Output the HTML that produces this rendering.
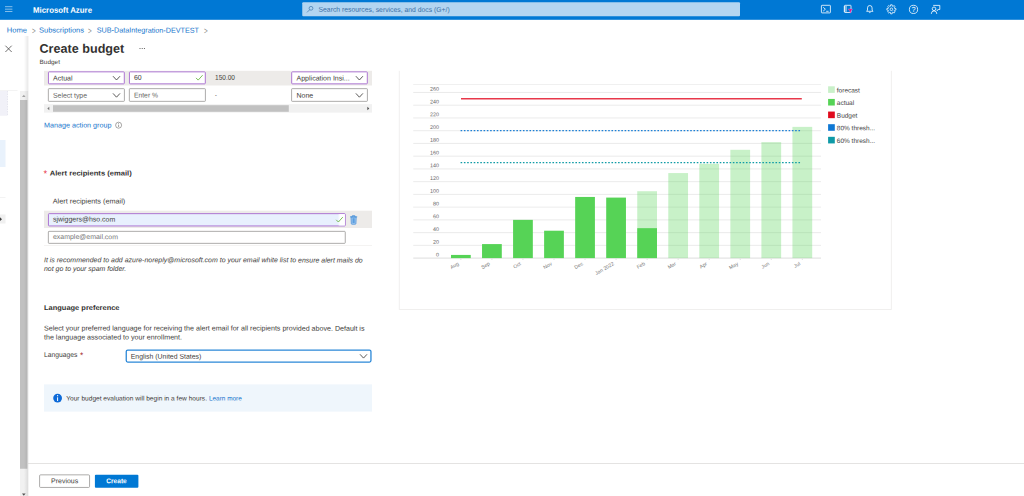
<!DOCTYPE html>
<html><head><meta charset="utf-8"><title>Create budget - Microsoft Azure</title>
<style>
html,body{margin:0;padding:0}
body{width:1024px;height:496px;position:relative;overflow:hidden;background:#fff;font-family:'Liberation Sans',sans-serif;color:#323130}
.t{position:absolute;left:0;top:0;white-space:pre;line-height:1;transform-origin:0 0}
svg{position:absolute;left:0;top:0;overflow:visible}
</style></head><body>

<svg width="1024" height="496" viewBox="0 0 1024 496">
<defs><linearGradient id="sh" x1="0" x2="1" y1="0" y2="0"><stop offset="0" stop-color="#000" stop-opacity="0"/><stop offset="1" stop-color="#000" stop-opacity="0.10"/></linearGradient><linearGradient id="wg" x1="0" x2="1" y1="0" y2="0"><stop offset="0" stop-color="#fff" stop-opacity="0"/><stop offset="1" stop-color="#fff" stop-opacity="1"/></linearGradient></defs>
<rect x="0" y="0" width="1024.00" height="19.80" fill="#0078d4"/>
<rect x="5" y="6.5" width="7.40" height="0.60" fill="#fff" opacity="0.85"/>
<rect x="5" y="8.799999999999999" width="7.40" height="0.60" fill="#fff" opacity="0.85"/>
<rect x="5" y="11.0" width="7.40" height="0.60" fill="#fff" opacity="0.85"/>
<rect x="302.25" y="2.3" width="437.75" height="14.00" fill="#b3d5f1" rx="1"/>
<rect x="0" y="90.4" width="17.50" height="0.50" fill="#e6e6e6"/>
<rect x="0" y="90.9" width="7.50" height="24.85" fill="#f1f1f8"/>
<line x1="7.5" x2="7.5" y1="91" y2="115.75" stroke="#d5d5e2" stroke-width="0.5" stroke-dasharray="1.5 1"/>
<rect x="0" y="140" width="5.50" height="27.00" fill="#e9f2fc"/>
<rect x="0" y="197.3" width="5.50" height="0.50" fill="#e6e6e6"/>
<rect x="0" y="214.5" width="5.50" height="9.00" fill="#f0f0f0"/>
<rect x="20" y="91" width="8.20" height="405.00" fill="#f1f1f1"/>
<rect x="20" y="100" width="7.30" height="368.75" fill="#c1c1c1"/>
<rect x="24" y="36" width="4.60" height="460.00" fill="url(#sh)"/>
<rect x="28.6" y="36" width="995.40" height="460.00" fill="#fff"/>
<rect x="44" y="70.8" width="328.00" height="14.70" fill="#edebe9"/>
<rect x="48.45" y="71.85000000000001" width="75.85" height="12.00" fill="#fff" stroke="#a568cf" stroke-width="0.9" rx="0.7"/>
<rect x="48.35" y="88.64999999999999" width="76.05" height="12.70" fill="#fff" stroke="#8a8886" stroke-width="0.7" rx="0.7"/>
<rect x="129.45" y="71.85000000000001" width="75.85" height="12.00" fill="#fff" stroke="#a568cf" stroke-width="0.9" rx="0.7"/>
<rect x="129.35" y="88.64999999999999" width="76.05" height="12.70" fill="#fff" stroke="#8a8886" stroke-width="0.7" rx="0.7"/>
<rect x="291.7" y="71.85000000000001" width="75.60" height="12.00" fill="#fff" stroke="#a568cf" stroke-width="0.9" rx="0.7"/>
<rect x="291.6" y="88.64999999999999" width="75.80" height="12.70" fill="#fff" stroke="#8a8886" stroke-width="0.7" rx="0.7"/>
<rect x="44" y="104.2" width="328.00" height="8.40" fill="#f1f1f1"/>
<rect x="53" y="105.2" width="235.80" height="6.60" fill="#c1c1c1"/>
<rect x="44" y="210.7" width="328.00" height="17.30" fill="#edebe9"/>
<rect x="48.45" y="213.64999999999998" width="296.80" height="12.30" fill="#e8f0fe" stroke="#a568cf" stroke-width="0.9" rx="0.7"/>
<rect x="339.5" y="214.1" width="5.40" height="11.40" fill="#fff"/>
<rect x="338" y="214.1" width="1.6" height="11.4" fill="url(#wg)"/>
<rect x="48.35" y="231.35" width="296.90" height="12.00" fill="#fff" stroke="#8a8886" stroke-width="0.7" rx="0.7"/>
<rect x="44" y="245.3" width="328.00" height="0.60" fill="#edebe9"/>
<rect x="126.25" y="350.04999999999995" width="244.70" height="12.00" fill="#fff" stroke="#2b88d8" stroke-width="1.3" rx="1.5"/>
<rect x="44" y="384.4" width="328.00" height="27.20" fill="#eff6fc"/>
<rect x="27.8" y="463.1" width="996.20" height="0.60" fill="#d2d0ce"/>
<rect x="39.6" y="474.85" width="49.95" height="12.60" fill="#fff" stroke="#8a8886" stroke-width="0.7" rx="1"/>
<rect x="94.9" y="474.8" width="43.50" height="13.00" fill="#0078d4" rx="1"/>
<path d="M399.3 70.8 V309.5 H891.4 V70.8" fill="none" stroke="#e6e4e2" stroke-width="0.6"/>
<line x1="413.25" x2="821" y1="84.5" y2="84.5" stroke="#e6e6e6" stroke-width="0.6"/>
<line x1="413.25" x2="821" y1="258.10" y2="258.10" stroke="#e4e4e4" stroke-width="1.4"/>
<text transform="matrix(1,0.0005,0,1,439.1,256.40)" font-size="5.4" fill="#666" text-anchor="end" font-family="'Liberation Sans',sans-serif">0</text>
<line x1="413.25" x2="821" y1="245.36" y2="245.36" stroke="#e2e2e2" stroke-width="0.7"/>
<text transform="matrix(1,0.0005,0,1,439.1,243.66)" font-size="5.4" fill="#666" text-anchor="end" font-family="'Liberation Sans',sans-serif">20</text>
<line x1="413.25" x2="821" y1="232.62" y2="232.62" stroke="#e2e2e2" stroke-width="0.7"/>
<text transform="matrix(1,0.0005,0,1,439.1,230.92)" font-size="5.4" fill="#666" text-anchor="end" font-family="'Liberation Sans',sans-serif">40</text>
<line x1="413.25" x2="821" y1="219.88" y2="219.88" stroke="#e2e2e2" stroke-width="0.7"/>
<text transform="matrix(1,0.0005,0,1,439.1,218.18)" font-size="5.4" fill="#666" text-anchor="end" font-family="'Liberation Sans',sans-serif">60</text>
<line x1="413.25" x2="821" y1="207.14" y2="207.14" stroke="#e2e2e2" stroke-width="0.7"/>
<text transform="matrix(1,0.0005,0,1,439.1,205.44)" font-size="5.4" fill="#666" text-anchor="end" font-family="'Liberation Sans',sans-serif">80</text>
<line x1="413.25" x2="821" y1="194.40" y2="194.40" stroke="#e2e2e2" stroke-width="0.7"/>
<text transform="matrix(1,0.0005,0,1,439.1,192.70)" font-size="5.4" fill="#666" text-anchor="end" font-family="'Liberation Sans',sans-serif">100</text>
<line x1="413.25" x2="821" y1="181.66" y2="181.66" stroke="#e2e2e2" stroke-width="0.7"/>
<text transform="matrix(1,0.0005,0,1,439.1,179.96)" font-size="5.4" fill="#666" text-anchor="end" font-family="'Liberation Sans',sans-serif">120</text>
<line x1="413.25" x2="821" y1="168.92" y2="168.92" stroke="#e2e2e2" stroke-width="0.7"/>
<text transform="matrix(1,0.0005,0,1,439.1,167.22)" font-size="5.4" fill="#666" text-anchor="end" font-family="'Liberation Sans',sans-serif">140</text>
<line x1="413.25" x2="821" y1="156.18" y2="156.18" stroke="#e2e2e2" stroke-width="0.7"/>
<text transform="matrix(1,0.0005,0,1,439.1,154.48)" font-size="5.4" fill="#666" text-anchor="end" font-family="'Liberation Sans',sans-serif">160</text>
<line x1="413.25" x2="821" y1="143.44" y2="143.44" stroke="#e2e2e2" stroke-width="0.7"/>
<text transform="matrix(1,0.0005,0,1,439.1,141.74)" font-size="5.4" fill="#666" text-anchor="end" font-family="'Liberation Sans',sans-serif">180</text>
<line x1="413.25" x2="821" y1="130.70" y2="130.70" stroke="#e2e2e2" stroke-width="0.7"/>
<text transform="matrix(1,0.0005,0,1,439.1,129.00)" font-size="5.4" fill="#666" text-anchor="end" font-family="'Liberation Sans',sans-serif">200</text>
<line x1="413.25" x2="821" y1="117.96" y2="117.96" stroke="#e2e2e2" stroke-width="0.7"/>
<text transform="matrix(1,0.0005,0,1,439.1,116.26)" font-size="5.4" fill="#666" text-anchor="end" font-family="'Liberation Sans',sans-serif">220</text>
<line x1="413.25" x2="821" y1="105.22" y2="105.22" stroke="#e2e2e2" stroke-width="0.7"/>
<text transform="matrix(1,0.0005,0,1,439.1,103.52)" font-size="5.4" fill="#666" text-anchor="end" font-family="'Liberation Sans',sans-serif">240</text>
<line x1="413.25" x2="821" y1="92.48" y2="92.48" stroke="#e2e2e2" stroke-width="0.7"/>
<text transform="matrix(1,0.0005,0,1,439.1,90.78)" font-size="5.4" fill="#666" text-anchor="end" font-family="'Liberation Sans',sans-serif">260</text>
<rect x="451.00" y="254.92" width="19.75" height="3.19" fill="#56d356"/>
<line x1="460.88" x2="460.88" y1="258.8" y2="260.0" stroke="#cfcfcf" stroke-width="0.6"/>
<text transform="translate(459.27,264.70) rotate(-30)" font-size="5.1" fill="#777" text-anchor="end" font-family="'Liberation Sans',sans-serif">Aug</text>
<rect x="482.04" y="244.09" width="19.75" height="14.01" fill="#56d356"/>
<line x1="491.92" x2="491.92" y1="258.8" y2="260.0" stroke="#cfcfcf" stroke-width="0.6"/>
<text transform="translate(490.31,264.70) rotate(-30)" font-size="5.1" fill="#777" text-anchor="end" font-family="'Liberation Sans',sans-serif">Sep</text>
<rect x="513.08" y="219.88" width="19.75" height="38.22" fill="#56d356"/>
<line x1="522.96" x2="522.96" y1="258.8" y2="260.0" stroke="#cfcfcf" stroke-width="0.6"/>
<text transform="translate(521.36,264.70) rotate(-30)" font-size="5.1" fill="#777" text-anchor="end" font-family="'Liberation Sans',sans-serif">Oct</text>
<rect x="544.12" y="230.71" width="19.75" height="27.39" fill="#56d356"/>
<line x1="554.00" x2="554.00" y1="258.8" y2="260.0" stroke="#cfcfcf" stroke-width="0.6"/>
<text transform="translate(552.39,264.70) rotate(-30)" font-size="5.1" fill="#777" text-anchor="end" font-family="'Liberation Sans',sans-serif">Nov</text>
<rect x="575.16" y="196.95" width="19.75" height="61.15" fill="#56d356"/>
<line x1="585.03" x2="585.03" y1="258.8" y2="260.0" stroke="#cfcfcf" stroke-width="0.6"/>
<text transform="translate(583.43,264.70) rotate(-30)" font-size="5.1" fill="#777" text-anchor="end" font-family="'Liberation Sans',sans-serif">Dec</text>
<rect x="606.20" y="197.59" width="19.75" height="60.51" fill="#56d356"/>
<line x1="616.08" x2="616.08" y1="258.8" y2="260.0" stroke="#cfcfcf" stroke-width="0.6"/>
<text transform="translate(614.48,264.70) rotate(-30)" font-size="5.1" fill="#777" text-anchor="end" font-family="'Liberation Sans',sans-serif">Jan 2022</text>
<rect x="637.24" y="191.22" width="19.75" height="66.88" fill="#54d254" fill-opacity="0.32"/>
<rect x="637.24" y="228.16" width="19.75" height="29.94" fill="#56d356"/>
<line x1="647.12" x2="647.12" y1="258.8" y2="260.0" stroke="#cfcfcf" stroke-width="0.6"/>
<text transform="translate(645.51,264.70) rotate(-30)" font-size="5.1" fill="#777" text-anchor="end" font-family="'Liberation Sans',sans-serif">Feb</text>
<rect x="668.28" y="173.06" width="19.75" height="85.04" fill="#54d254" fill-opacity="0.32"/>
<line x1="678.15" x2="678.15" y1="258.8" y2="260.0" stroke="#cfcfcf" stroke-width="0.6"/>
<text transform="translate(676.55,264.70) rotate(-30)" font-size="5.1" fill="#777" text-anchor="end" font-family="'Liberation Sans',sans-serif">Mar</text>
<rect x="699.32" y="163.82" width="19.75" height="94.28" fill="#54d254" fill-opacity="0.32"/>
<line x1="709.19" x2="709.19" y1="258.8" y2="260.0" stroke="#cfcfcf" stroke-width="0.6"/>
<text transform="translate(707.59,264.70) rotate(-30)" font-size="5.1" fill="#777" text-anchor="end" font-family="'Liberation Sans',sans-serif">Apr</text>
<rect x="730.36" y="149.81" width="19.75" height="108.29" fill="#54d254" fill-opacity="0.32"/>
<line x1="740.24" x2="740.24" y1="258.8" y2="260.0" stroke="#cfcfcf" stroke-width="0.6"/>
<text transform="translate(738.63,264.70) rotate(-30)" font-size="5.1" fill="#777" text-anchor="end" font-family="'Liberation Sans',sans-serif">May</text>
<rect x="761.40" y="142.17" width="19.75" height="115.93" fill="#54d254" fill-opacity="0.32"/>
<line x1="771.27" x2="771.27" y1="258.8" y2="260.0" stroke="#cfcfcf" stroke-width="0.6"/>
<text transform="translate(769.67,264.70) rotate(-30)" font-size="5.1" fill="#777" text-anchor="end" font-family="'Liberation Sans',sans-serif">Jun</text>
<rect x="792.44" y="126.88" width="19.75" height="131.22" fill="#54d254" fill-opacity="0.32"/>
<line x1="802.32" x2="802.32" y1="258.8" y2="260.0" stroke="#cfcfcf" stroke-width="0.6"/>
<text transform="translate(800.72,264.70) rotate(-30)" font-size="5.1" fill="#777" text-anchor="end" font-family="'Liberation Sans',sans-serif">Jul</text>
<line x1="461" x2="801.8" y1="98.85" y2="98.85" stroke="#e8384a" stroke-width="1.5"/>
<line x1="460.6" x2="801" y1="130.70" y2="130.70" stroke="#1b7fd6" stroke-width="1.3" stroke-dasharray="1.6 1.68"/>
<line x1="460.6" x2="801" y1="162.55" y2="162.55" stroke="#109ca6" stroke-width="1.3" stroke-dasharray="1.6 1.68"/>
<rect x="828.1" y="86.30" width="6.7" height="6.6" fill="#c9f0c9"/>
<text transform="matrix(1,0.0005,0,1,836.8,92.40)" font-size="6.5" fill="#404040" font-family="'Liberation Sans',sans-serif">forecast</text>
<rect x="828.1" y="98.93" width="6.7" height="6.6" fill="#56d356"/>
<text transform="matrix(1,0.0005,0,1,836.8,105.03)" font-size="6.5" fill="#404040" font-family="'Liberation Sans',sans-serif">actual</text>
<rect x="828.1" y="111.56" width="6.7" height="6.6" fill="#e00b1c"/>
<text transform="matrix(1,0.0005,0,1,836.8,117.66)" font-size="6.5" fill="#404040" font-family="'Liberation Sans',sans-serif">Budget</text>
<rect x="828.1" y="124.19" width="6.7" height="6.6" fill="#0f78d4"/>
<text transform="matrix(1,0.0005,0,1,836.8,130.29)" font-size="6.5" fill="#404040" font-family="'Liberation Sans',sans-serif">80% thresh...</text>
<rect x="828.1" y="136.82" width="6.7" height="6.6" fill="#0e9aa7"/>
<text transform="matrix(1,0.0005,0,1,836.8,142.92)" font-size="6.5" fill="#404040" font-family="'Liberation Sans',sans-serif">60% thresh...</text>
<path d="M5.4 45.7 L11.7 52 M11.7 45.7 L5.4 52" stroke="#323130" stroke-width="0.7" fill="none"/>
<circle cx="140" cy="48.6" r="0.5" fill="#323130"/>
<circle cx="142.2" cy="48.6" r="0.5" fill="#323130"/>
<circle cx="144.4" cy="48.6" r="0.5" fill="#323130"/>
<circle cx="311" cy="8.3" r="1.9" stroke="#3e77ad" stroke-width="0.7" fill="none"/><path d="M309.6 9.8 L307 12.4" stroke="#3e77ad" stroke-width="0.7"/>
<path d="M113.0 76.19999999999999 L116.5 80.0 L120.0 76.19999999999999" stroke="#323130" stroke-width="0.8" fill="none"/>
<path d="M113.0 93.39999999999999 L116.5 97.2 L120.0 93.39999999999999" stroke="#323130" stroke-width="0.8" fill="none"/>
<path d="M355.9 76.19999999999999 L359.4 80.0 L362.9 76.19999999999999" stroke="#323130" stroke-width="0.8" fill="none"/>
<path d="M355.9 93.39999999999999 L359.4 97.2 L362.9 93.39999999999999" stroke="#323130" stroke-width="0.8" fill="none"/>
<path d="M360.0 354.3 L363.5 358.09999999999997 L367.0 354.3" stroke="#323130" stroke-width="0.8" fill="none"/>
<path d="M196.0 77.9 L198.2 80.10000000000001 L202.6 75.2" stroke="#5bb030" stroke-width="0.8" fill="none"/>
<path d="M336.2 219.79999999999998 L338.4 222.0 L342.8 217.1" stroke="#5bb030" stroke-width="0.8" fill="none"/>
<path d="M351 217 H356.2 L355.9 223.6 Q355.9 224.2 355.3 224.2 H351.9 Q351.3 224.2 351.3 223.6 Z" fill="#a6caee" stroke="#4a92dc" stroke-width="0.8"/><rect x="352.5" y="218.2" width="2.2" height="4.8" fill="#5a9ee0"/><path d="M350 216.8 H357.2" stroke="#3d8ad8" stroke-width="0.8"/><path d="M352.4 216.6 V215.6 H354.8 V216.6" fill="none" stroke="#3d8ad8" stroke-width="0.7"/>
<circle cx="118.6" cy="125.2" r="3" stroke="#605e5c" stroke-width="0.55" fill="none"/><path d="M118.6 124.6 V127" stroke="#605e5c" stroke-width="0.6"/><circle cx="118.6" cy="123.5" r="0.4" fill="#605e5c"/>
<circle cx="57.6" cy="398.1" r="4.4" fill="#0d6ad8"/><path d="M57.6 397.3 V401" stroke="#fff" stroke-width="1"/><circle cx="57.6" cy="395.7" r="0.65" fill="#fff"/>
<path d="M22 97 L23.8 94.8 L25.6 97 Z" fill="#a3a3a3"/>
<path d="M22 493.5 L23.8 495.7 L25.6 493.5 Z" fill="#505050"/>
<path d="M49.3 106.7 L47.3 108.5 L49.3 110.3 Z" fill="#7a7a7a"/>
<path d="M367.3 106.7 L369.3 108.5 L367.3 110.3 Z" fill="#505050"/>
<path d="M0 217.3 L2 219.2 L0 221.1 Z" fill="#404040"/>
<rect x="821.4" y="5.3" width="9" height="7.6" rx="0.6" stroke="#fff" fill="none" stroke-width="0.8"/><path d="M823.2 7.3 L825.4 9.2 L823.2 11.1 M826.2 11.3 H828.6" stroke="#fff" fill="none" stroke-width="0.8"/>
<rect x="844.5" y="5.3" width="6.5" height="7.2" rx="0.5" stroke="#fff" fill="none" stroke-width="0.8"/><rect x="845.2" y="6" width="1.8" height="5.8" fill="#fff" opacity="0.45"/><path d="M843.6 7 H845.4 M843.6 9 H845.4 M843.6 11 H845.4" stroke="#fff" fill="none" stroke-width="0.8"/><path d="M848.2 9 H852.6 L850.9 10.9 V13 L849.9 12.4 V10.9 Z" fill="#e3008c" stroke="#f7b9dd" stroke-width="0.3"/>
<path d="M866.6 11.3 H873 L872.1 10.1 V7.9 A2.3 2.4 0 0 0 867.5 7.9 V10.1 Z" stroke="#fff" fill="none" stroke-width="0.8"/><path d="M869 12.2 A0.9 0.8 0 0 0 870.6 12.2" stroke="#fff" fill="none" stroke-width="0.8"/>
<polygon points="894.46,8.35 895.93,8.52 895.93,10.08 894.46,10.25 894.23,10.79 895.16,11.96 894.06,13.06 892.89,12.13 892.35,12.36 892.18,13.83 890.62,13.83 890.45,12.36 889.91,12.13 888.74,13.06 887.64,11.96 888.57,10.79 888.34,10.25 886.87,10.08 886.87,8.52 888.34,8.35 888.57,7.81 887.64,6.64 888.74,5.54 889.91,6.47 890.45,6.24 890.62,4.77 892.18,4.77 892.35,6.24 892.89,6.47 894.06,5.54 895.16,6.64 894.23,7.81" stroke="#fff" fill="none" stroke-width="0.75" stroke-linejoin="round"/><circle cx="891.4" cy="9.3" r="1.3" stroke="#fff" fill="none" stroke-width="0.75"/>
<circle cx="913.5" cy="9.4" r="4.1" stroke="#fff" fill="none" stroke-width="0.8"/><text transform="matrix(1,0.0005,0,1,913.5,12.1)" font-size="7.4" fill="#fff" text-anchor="middle" font-family="'Liberation Sans',sans-serif">?</text>
<circle cx="934" cy="8.8" r="1.8" stroke="#fff" fill="none" stroke-width="0.8"/><path d="M931.3 13.9 A2.75 3 0 0 1 936.8 13.9" stroke="#fff" fill="none" stroke-width="0.8"/><path d="M933.2 5.4 H939.8 V9.5 H938.3 L937.2 10.7 V9.5" stroke="#fff" fill="none" stroke-width="0.8"/>
</svg>
<span class="t" style="font-size:8.0px;font-weight:700;font-style:normal;color:#fff;transform:matrix(0.9808,0.0005,0,1,33,6.70)">Microsoft Azure</span>
<span class="t" style="font-size:7.0px;font-weight:400;font-style:normal;color:#396fa6;transform:matrix(0.9736,0.0005,0,1,318.5,5.85)">Search resources, services, and docs (G+/)</span>
<span class="t" style="font-size:7.2px;font-weight:400;font-style:normal;color:#1474cc;transform:matrix(1.0554,0.0005,0,1,6.75,26.60)">Home</span>
<span class="t" style="font-size:9.5px;font-weight:400;font-style:normal;color:#8a8886;transform:matrix(0.6652,0.0005,0,1,31.9,25.90)">&gt;</span>
<span class="t" style="font-size:7.2px;font-weight:400;font-style:normal;color:#1474cc;transform:matrix(1.0427,0.0005,0,1,39,26.60)">Subscriptions</span>
<span class="t" style="font-size:9.5px;font-weight:400;font-style:normal;color:#8a8886;transform:matrix(0.6652,0.0005,0,1,87.9,25.90)">&gt;</span>
<span class="t" style="font-size:7.2px;font-weight:400;font-style:normal;color:#1474cc;transform:matrix(1.0037,0.0005,0,1,96.75,26.60)">SUB-DataIntegration-DEVTEST</span>
<span class="t" style="font-size:9.5px;font-weight:400;font-style:normal;color:#8a8886;transform:matrix(0.6652,0.0005,0,1,203.9,25.90)">&gt;</span>
<span class="t" style="font-size:12.4px;font-weight:700;font-style:normal;color:#323130;transform:matrix(1.0173,0.0005,0,1,39.5,42.80)">Create budget</span>
<span class="t" style="font-size:6.1px;font-weight:400;font-style:normal;color:#484644;transform:matrix(1.0606,0.0005,0,1,39.5,59.00)">Budget</span>
<span class="t" style="font-size:7.0px;font-weight:400;font-style:normal;color:#3d3b39;transform:matrix(1.0016,0.0005,0,1,53,74.40)">Actual</span>
<span class="t" style="font-size:7.0px;font-weight:400;font-style:normal;color:#3d3b39;transform:matrix(0.9940,0.0005,0,1,134,73.80)">60</span>
<span class="t" style="font-size:7.0px;font-weight:400;font-style:normal;color:#3d3b39;transform:matrix(0.9336,0.0005,0,1,215,73.80)">150.00</span>
<span class="t" style="font-size:7.0px;font-weight:400;font-style:normal;color:#3d3b39;transform:matrix(1.0062,0.0005,0,1,296.5,74.40)">Application Insi...</span>
<span class="t" style="font-size:7.0px;font-weight:400;font-style:normal;color:#605e5c;transform:matrix(0.9815,0.0005,0,1,53,91.70)">Select type</span>
<span class="t" style="font-size:7.0px;font-weight:400;font-style:normal;color:#605e5c;transform:matrix(0.9636,0.0005,0,1,134,91.40)">Enter %</span>
<span class="t" style="font-size:7.0px;font-weight:400;font-style:normal;color:#3d3b39;transform:matrix(0.7680,0.0005,0,1,215,91.40)">-</span>
<span class="t" style="font-size:7.0px;font-weight:400;font-style:normal;color:#3d3b39;transform:matrix(1.0009,0.0005,0,1,296.5,91.70)">None</span>
<span class="t" style="font-size:7.0px;font-weight:400;font-style:normal;color:#1474cc;transform:matrix(1.0261,0.0005,0,1,44,121.50)">Manage action group</span>
<span class="t" style="font-size:9.4px;font-weight:400;font-style:normal;color:#e8283c;transform:matrix(1.0010,0.0005,0,1,43.55,168.75)">*</span>
<span class="t" style="font-size:7.0px;font-weight:700;font-style:normal;color:#323130;transform:matrix(1.0865,0.0005,0,1,49.75,169.50)">Alert recipients (email)</span>
<span class="t" style="font-size:7.0px;font-weight:400;font-style:normal;color:#3d3b39;transform:matrix(1.0411,0.0005,0,1,52.75,197.50)">Alert recipients (email)</span>
<span class="t" style="font-size:7.0px;font-weight:400;font-style:normal;color:#3d3b39;transform:matrix(0.9920,0.0005,0,1,53,215.60)">sjwiggers@hso.com</span>
<span class="t" style="font-size:7.0px;font-weight:400;font-style:normal;color:#767676;transform:matrix(0.9928,0.0005,0,1,53,233.10)">example@email.com</span>
<span class="t" style="font-size:7.0px;font-weight:400;font-style:italic;color:#3d3b39;transform:matrix(0.9964,0.0005,0,1,44,256.25)">It is recommended to add azure-noreply@microsoft.com to your email white list to ensure alert mails do</span>
<span class="t" style="font-size:7.0px;font-weight:400;font-style:italic;color:#3d3b39;transform:matrix(0.9908,0.0005,0,1,44,265.00)">not go to your spam folder.</span>
<span class="t" style="font-size:7.0px;font-weight:700;font-style:normal;color:#323130;transform:matrix(1.0662,0.0005,0,1,44,304.00)">Language preference</span>
<span class="t" style="font-size:7.0px;font-weight:400;font-style:normal;color:#3d3b39;transform:matrix(1.0144,0.0005,0,1,44,324.50)">Select your preferred language for receiving the alert email for all recipients provided above. Default is</span>
<span class="t" style="font-size:7.0px;font-weight:400;font-style:normal;color:#3d3b39;transform:matrix(1.0161,0.0005,0,1,44,333.50)">the language associated to your enrollment.</span>
<span class="t" style="font-size:7.0px;font-weight:400;font-style:normal;color:#3d3b39;transform:matrix(0.9666,0.0005,0,1,44,351.00)">Languages</span>
<span class="t" style="font-size:8.3px;font-weight:400;font-style:normal;color:#a4262c;transform:matrix(0.9986,0.0005,0,1,79.9,351.00)">*</span>
<span class="t" style="font-size:7.0px;font-weight:400;font-style:normal;color:#3d3b39;transform:matrix(0.9847,0.0005,0,1,130.75,352.75)">English (United States)</span>
<span class="t" style="font-size:6.6px;font-weight:400;font-style:normal;color:#3d3b39;transform:matrix(0.9990,0.0005,0,1,66.25,395.50)">Your budget evaluation will begin in a few hours.</span>
<span class="t" style="font-size:6.6px;font-weight:400;font-style:normal;color:#1474cc;transform:matrix(0.9708,0.0005,0,1,209,395.50)">Learn more</span>
<span class="t" style="font-size:7.0px;font-weight:400;font-style:normal;color:#3d3b39;transform:matrix(1.0006,0.0005,0,1,51,477.25)">Previous</span>
<span class="t" style="font-size:7.0px;font-weight:700;font-style:normal;color:#fff;transform:matrix(0.9405,0.0005,0,1,106.25,477.25)">Create</span>
</body></html>
